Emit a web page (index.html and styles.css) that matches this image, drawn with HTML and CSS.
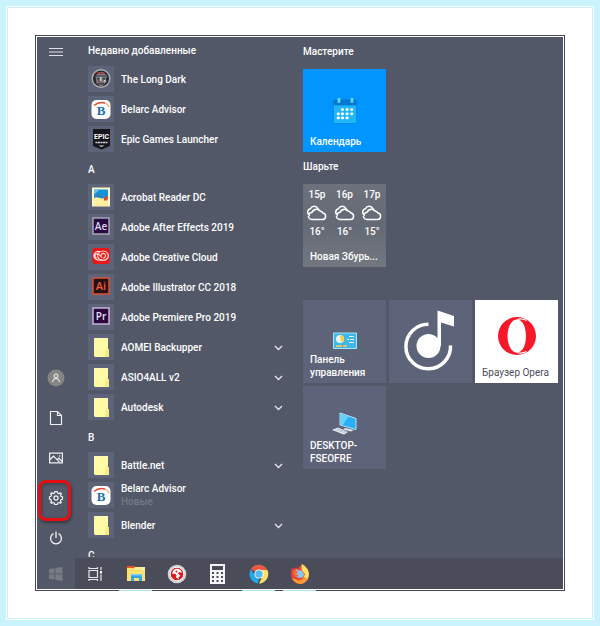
FILE: index.html
```html
<!DOCTYPE html>
<html lang="ru">
<head>
<meta charset="utf-8">
<title>Пуск</title>
<link rel="stylesheet" href="styles.css">
</head>
<body>
<svg class="defs" aria-hidden="true">
  <symbol id="folder" viewBox="0 0 26 26">
    <path fill="#fffaa6" d="M6 4h14v11l1 1v7H7l-1-1z"/>
    <path fill="#f8ea82" d="M18 15h3v8h-4z"/>
    <path fill="#fff5c0" d="M6 4h14v1H6z"/>
  </symbol>
  <symbol id="belarc" viewBox="0 0 26 26">
    <rect x="3.500" y="4" width="19" height="19" rx="5" fill="#fff"/>
    <path fill="none" stroke="#e8442e" stroke-width="1.500" d="M6 9.500Q11 5 17 7"/>
    <path fill="none" stroke="#f6a04c" stroke-width="1.200" d="M17 7q3 1 4 4"/>
    <text x="13" y="19" text-anchor="middle" font-family="Liberation Serif, serif" font-weight="bold" font-size="13" fill="#1c6fae">B</text>
  </symbol>
  <symbol id="chev" viewBox="0 0 9 9"><path fill="none" stroke="#e4e6ea" stroke-width="1.300" d="M1 3l3.500 3.500L8 3"/></symbol>
  <symbol id="cloud" viewBox="0 0 20 16">
    <path fill="none" stroke="#fff" stroke-width="1.500" stroke-linejoin="round" d="M5 14.500a3.500 3.500 0 0 1-.2-7A5 5 0 0 1 13.500 6.300a3.800 3.800 0 0 1 2.500 1.700a3.300 3.300 0 0 1-.3 6.500zM3 10.500a3.500 3.500 0 0 1 .5-6.700A4.200 4.200 0 0 1 11 3.500l1 2.500M5 7.500A4.500 4.500 0 0 1 9 4.500"/>
  </symbol>
</svg>

<div class="mat"><div class="mat-line"><div class="frame"><div class="desktop">
  <main class="menu">
    <nav class="rail" aria-label="Система">
      <button class="rail-btn rail-top" aria-label="Меню"><svg width="14" height="10" viewBox="0 0 14 10"><path stroke="#dfe1e6" d="M0 1.500h14M0 5h14M0 8.500h14"/></svg></button>
      <button class="rail-btn" aria-label="Пользователь"><svg width="18" height="18" viewBox="0 0 18 18"><circle cx="9" cy="9" r="8.500" fill="#858585"/><circle cx="9" cy="7" r="2" fill="none" stroke="#fff"/><path fill="none" stroke="#fff" d="M5.500 13a3.500 3.500 0 0 1 7 0"/></svg></button>
      <button class="rail-btn" aria-label="Документы"><svg width="14" height="16" viewBox="0 0 14 16"><path fill="none" stroke="#eceef1" stroke-width="1.200" d="M1.500 1.500h7l4 4v9h-11zM8.500 1.500v4h4"/></svg></button>
      <button class="rail-btn" aria-label="Изображения"><svg width="14" height="12" viewBox="0 0 14 12"><path fill="none" stroke="#eceef1" stroke-width="1.200" d="M.6 1.200h12.800v9.600H.6zM1 7.500l3.500-3.300 6 6M8 8l1.800-1.800 3.200 3"/><circle cx="10.500" cy="4" r=".8" fill="#eceef1"/></svg></button>
      <button class="rail-btn rail-marked" aria-label="Параметры"><svg width="16" height="16" viewBox="-8 -8 16 16"><g fill="none" stroke="#f4f5f7" stroke-width="1.200" stroke-linejoin="round"><path d="M-1.300 -6.300L1.300 -6.300L1.800 -4.700L3 -4.200L4.500 -5.200L5.400 -4.300L4.500 -2.800L4.900 -1.600L6.500 -1.200L6.500 1.200L4.900 1.700L4.400 2.900L5.300 4.400L4.400 5.300L2.900 4.500L1.700 5L1.300 6.500L-1.300 6.500L-1.700 5L-2.900 4.500L-4.400 5.300L-5.300 4.400L-4.500 2.900L-5 1.700L-6.500 1.200L-6.500 -1.200L-5 -1.700L-4.500 -2.900L-5.300 -4.400L-4.400 -5.300L-2.900 -4.400L-1.800 -4.800z"/><circle r="2.100"/></g></svg></button>
      <button class="rail-btn" aria-label="Выключение"><svg width="14" height="14" viewBox="0 0 14 14"><path fill="none" stroke="#f4f5f7" stroke-width="1.300" d="M4.500 2.700a5.400 5.400 0 1 0 5 0M7 .5v6.500"/></svg></button>
    </nav>

    <section class="apps">
      <h2 class="head">Недавно добавленные</h2>
      <a class="app" href="#"><svg class="ico" viewBox="0 0 26 26"><circle cx="13" cy="12.500" r="8.800" fill="#2c2a2f" stroke="#aeb0b5" stroke-width="1.400"/><path fill="#777b82" d="M7.500 10l3-3.500 5-.5 3.500 4-1 3 .5 3-4 4h-3l-3-3z"/><path fill="#3a3c46" d="M8 9.500h10v1H8zM9 12h2.500v1.500H9zM14.500 12h2.500v1.500h-2.500zM10 17h6v1.500h-6z"/><path fill="#a93b38" d="M9 6.500h7v1.500H9zM10 14h1.500v2.500H10z"/><path fill="#c7c9ce" d="M12 11h1.500v4H12zM16 14h1.500v2H16z"/></svg><span>The Long Dark</span></a>
      <a class="app" href="#"><svg class="ico"><use href="#belarc"/></svg><span>Belarc Advisor</span></a>
      <a class="app" href="#"><svg class="ico" viewBox="0 0 26 26"><path fill="#17161d" d="M5 3h17v17l-8.500 3.500L5 20z"/><text x="13.500" y="13" text-anchor="middle" font-family="Roboto, sans-serif" font-weight="700" font-size="7" fill="#fff">EPIC</text><path stroke="#d8d8dc" stroke-width="1.500" stroke-dasharray="2 .5" d="M7.500 16.500h12"/><path fill="#ddd" d="M10.500 19.500h6l-3 1.500z"/></svg><span>Epic Games Launcher</span></a>
      <h2 class="head">A</h2>
      <a class="app" href="#"><svg class="ico" viewBox="0 0 26 26"><path fill="#fff8c8" d="M4 3.500h18v19H4z"/><path fill="#1692dc" d="M6 5.500h14v9H6z"/><path fill="#62c3ec" d="M6 5.500h6l-6 5z"/><path fill="#fff1a0" d="M6 14l4-1 4 2 6-1v8H6z"/><path fill="#3c7ba5" d="M9 10.500l2-1 1 3h2v1H9z"/><path fill="#df4635" d="M16 13.500l3-2 1 3-1 2h-3z"/></svg><span>Acrobat Reader DC</span></a>
      <a class="app" href="#"><svg class="ico" viewBox="0 0 26 26"><path fill="#260b43" stroke="#a9a5b2" stroke-width="1.500" d="M5 4h16v16H5z"/><text x="13" y="16" text-anchor="middle" font-family="Open Sans, sans-serif" font-weight="600" font-size="10" fill="#ded2f2">Ae</text></svg><span>Adobe After Effects 2019</span></a>
      <a class="app" href="#"><svg class="ico" viewBox="0 0 26 26"><rect x="4.500" y="4" width="17" height="16" rx="3" fill="#ee1515"/><g fill="none" stroke="#ffd9d6" stroke-width="1.200"><ellipse cx="15" cy="11.700" rx="5.300" ry="4.700"/><path d="M12 7.800a4.300 4.300 0 1 0-.5 8h3M9 14a2 2 0 0 1 0-4.200q2 0 3 1.700l2 2.200M13 12a2.300 2.300 0 1 1 2 2"/></g></svg><span>Adobe Creative Cloud</span></a>
      <a class="app" href="#"><svg class="ico" viewBox="0 0 26 26"><path fill="#251217" stroke="#dd5130" stroke-width="1.500" d="M5 4h16v16H5z"/><text x="13" y="16" text-anchor="middle" font-family="Open Sans, sans-serif" font-weight="600" font-size="11" fill="#f05a34">Ai</text></svg><span>Adobe Illustrator CC 2018</span></a>
      <a class="app" href="#"><svg class="ico" viewBox="0 0 26 26"><path fill="#26083e" stroke="#c9b5d8" stroke-width="1.500" d="M5 4h16v16H5z"/><text x="13" y="16" text-anchor="middle" font-family="Open Sans, sans-serif" font-weight="600" font-size="10" fill="#f1e3fb">Pr</text></svg><span>Adobe Premiere Pro 2019</span></a>
      <a class="app" href="#"><svg class="ico"><use href="#folder"/></svg><span>AOMEI Backupper</span><svg class="chev"><use href="#chev"/></svg></a>
      <a class="app" href="#"><svg class="ico"><use href="#folder"/></svg><span>ASIO4ALL v2</span><svg class="chev"><use href="#chev"/></svg></a>
      <a class="app" href="#"><svg class="ico"><use href="#folder"/></svg><span>Autodesk</span><svg class="chev"><use href="#chev"/></svg></a>
      <h2 class="head">B</h2>
      <a class="app" href="#"><svg class="ico"><use href="#folder"/></svg><span>Battle.net</span><svg class="chev"><use href="#chev"/></svg></a>
      <a class="app" href="#"><svg class="ico"><use href="#belarc"/></svg><span>Belarc Advisor<small class="fresh">Новые</small></span></a>
      <a class="app" href="#"><svg class="ico"><use href="#folder"/></svg><span>Blender</span><svg class="chev"><use href="#chev"/></svg></a>
      <h2 class="head head-cut">C</h2>
    </section>

    <section class="tiles">
      <h2 class="tiles-head">Мастерите</h2>
      <div class="tile-grid">
        <a class="tile tile-calendar" href="#"><svg class="tile-pic" width="26" height="28" viewBox="0 0 28 30"><rect x="1" y="2" width="26" height="27" rx="3" fill="#0587e0"/><path fill="#0877cf" d="M2 3h24v6H2z"/><path fill="#1fb6fa" d="M2 9h24v19H2z"/><path fill="#62d5fb" d="M6 1h3v5H6zM20 1h3v5h-3z"/><path stroke="#fff" stroke-width="3" stroke-linecap="round" d="M11 13.500h.5M16 13.500h.5M21 13.500h.5M6.500 18h.5M11 18h.5M16 18h.5M21 18h.5M6.500 22.500h.5M11 22.500h.5M16 22.500h.5"/></svg><span>Календарь</span></a>
      </div>
      <h2 class="tiles-head">Шарьте</h2>
      <div class="tile-grid">
        <a class="tile tile-weather" href="#">
          <span class="hours">
            <span class="hour">15р<svg width="20" height="16"><use href="#cloud"/></svg>16°</span>
            <span class="hour">16р<svg width="20" height="16"><use href="#cloud"/></svg>16°</span>
            <span class="hour">17р<svg width="20" height="16"><use href="#cloud"/></svg>15°</span>
          </span>
          <span>Новая Збурь...</span>
        </a>
      </div>
      <div class="tile-grid tile-group">
        <a class="tile" href="#"><svg class="tile-pic pic-small" width="24" height="18" viewBox="0 0 24 18"><path fill="#3fb7ed" stroke="#a9e6fb" d="M.5 1h23v15.500H.5z"/><circle cx="7" cy="7" r="4" fill="#e6f7ff"/><path fill="#ffcf3f" d="M7 7V3a4 4 0 0 1 2 7.500z"/><path stroke="#e0f7ff" d="M16 4.500h5M14 7.500h2M17 7.500h4M16 10.500h5"/><path stroke="#f5d65b" stroke-width="1.500" d="M3 14h11"/><path stroke="#e06a3c" stroke-width="2" d="M9 14h1"/></svg><span>Панель управления</span></a>
        <a class="tile tile-full" href="#" aria-label="Музыка"><svg width="83" height="83" viewBox="0 0 83 83"><circle cx="39.500" cy="46" r="12" fill="#fff"/><path fill="#fff" d="M48.500 10.500L65 16v10.500l-13-4V46h-3.500z"/><path fill="none" stroke="#fff" stroke-width="3.500" d="M39.500 24.200A22.300 22.300 0 1 0 61.500 45.500"/></svg></a>
        <a class="tile tile-opera" href="#"><svg class="tile-pic pic-opera" width="40" height="40" viewBox="0 0 40 40"><path fill="#f9182a" fill-rule="evenodd" d="M20 1A19 19 0 1 0 20 39A19 19 0 1 0 20 1zM20 3.500C25.500 3.500 29 11 29 20S25.500 36.500 20 36.500S10.500 29 10.500 20S14.500 3.500 20 3.500z"/><path fill="none" stroke="#fff" stroke-width="1.200" d="M20 3.500q5-1.500 9.500 1M20 36.500q5 1.500 9.500-1"/></svg><span>Браузер Opera</span></a>
        <a class="tile" href="#"><svg class="tile-pic pic-small" width="28" height="24" viewBox="0 0 28 24"><path fill="#2aaef4" stroke="#b9e3f6" d="M9 1l16 5.500v11L9 13z"/><path fill="#68d0fb" d="M9.500 2l8 2.500-6 9-2-1z"/><path fill="#dfe6ee" d="M14 16l9 2-3 1.500-8-2z"/><path fill="#f1f4f8" d="M7 15.500L17 20l-4 2.500L1 18z"/><path stroke="#9ba6b8" stroke-width=".7" d="M4 17.800l10 3M6 16.600l9.500 3.500"/></svg><span>DESKTOP-FSEOFRE</span></a>
      </div>
    </section>
  </main>

  <footer class="taskbar">
    <button class="start" aria-label="Пуск"><svg width="14" height="14" viewBox="0 0 14 14"><path fill="#777b84" d="M0 2l5.500-.8v5.300H0zM6.300 1.100L13.500 0v6.500H6.300zM0 7.300h5.500v5.300L0 11.800zM6.300 7.300h7.200V14l-7.200-1.200z"/></svg></button>
    <button class="task task-view" aria-label="Представление задач"><svg width="15" height="14" viewBox="0 0 15 14"><path fill="none" stroke="#e7e8ec" stroke-width="1.200" d="M1 3.500h8.500v7H1zM1 0v1.500h8.500V0M1 14v-1.500h8.500V14M13 0v3M13 7.500V14"/><path fill="#fff" d="M12 4h2v2.500h-2z"/></svg></button>
    <button class="task running" aria-label="Проводник"><svg width="20" height="18" viewBox="0 0 20 18"><path fill="#e2552c" d="M1 1h8v4H1z"/><path fill="#ffe070" d="M1 3h7l1-1h10v14H1z"/><path fill="#ffee99" d="M9 2h10v3H9z"/><path fill="#36a5e8" d="M5 9h11v7h-3v-3H8v3H5z"/><path fill="#79cdf5" d="M5 9h11v1.500H5z"/></svg></button>
    <button class="task" aria-label="Просмотр"><svg width="20" height="20" viewBox="0 0 20 20"><circle cx="10" cy="10" r="9.300" fill="#d3d4da"/><circle cx="10" cy="10" r="6.800" fill="#e0191c" stroke="#fff"/><path fill="#fff" d="M5 9.500Q6 5 10 4.800q4 0 5 4L12 8l-1 1.500 2.500 2.500-2 1 .5 2.500-3-2 .5-2-1-1.500z"/><circle cx="9.500" cy="7.500" r="1" fill="#e0191c"/></svg></button>
    <button class="task" aria-label="Калькулятор"><svg width="17" height="20" viewBox="0 0 17 20"><path fill="#f5f5f7" d="M1 0h15v20H1z"/><path fill="#4a4c5a" d="M3 2h11v4H3z"/><path stroke="#4a4c5a" stroke-width="2" stroke-dasharray="2 2.500" d="M3 9h11M3 13h11M3 17h11"/></svg></button>
    <button class="task running" aria-label="Chrome"><svg width="20" height="20" viewBox="0 0 20 20"><path fill="#e85a43" d="M10 10L1.800 5.300A9.400 9.400 0 0 1 18.400 6H10z"/><path fill="#ffe16a" d="M10 6h8.400A9.400 9.400 0 0 1 10 19.400l3.700-7.400z"/><path fill="#23a7ec" d="M1.800 5.300L6.500 12l3.500 2-1 5.400A9.400 9.400 0 0 1 1.800 5.300z"/><circle cx="10" cy="10" r="4.600" fill="#fff"/><circle cx="10" cy="10" r="3.700" fill="#53b9ee"/></svg></button>
    <button class="task running" aria-label="Firefox"><svg width="20" height="20" viewBox="0 0 20 20"><path fill="#ef3e36" d="M2 4l2 1 2-2 1 2 5-5q7 4 7 11a8.900 8.900 0 0 1-18 0Q1 7 2 4z"/><path fill="#ffe165" d="M12 0q7 4 7 11a9 9 0 0 1-3 6q-1-2-3-2l2-5q-5-4-3-10z"/><path fill="#ff9a35" d="M5 15q5 3 10-2l3 2q-3 5-8 5-6-1-8-6z"/><path fill="#8bc4e8" d="M6 5q3 2 5 1l3 4q0 4-4 4T5 10z"/><path fill="#f4683a" d="M4 5l4 3-2 2 3 2-4 1-2-4z"/></svg></button>
  </footer>
</div></div></div></div>
</body>
</html>
```
FILE: styles.css
```css
* { box-sizing: border-box; }

body {
  margin: 0;
  background: #fff;
  font: 500 10px/13px Roboto, "Noto Sans", sans-serif;
  color: #fff;
}

.defs { display: none; }

a { color: inherit; text-decoration: none; }

button {
  display: flex;
  align-items: center;
  justify-content: center;
  padding: 0;
  border: 0;
  background: none;
}

h2 { margin: 0; font-size: 10px; font-weight: 500; }

/* Decorative border around the desktop */
.mat {
  display: flex;
  min-height: 100vh;
  padding: 1px;
  border: 6px solid #caf3fe;
}

.mat-line {
  display: flex;
  flex: 1;
  padding: 27px;
  border: 1px solid #caf3fe;
}

.frame {
  display: flex;
  flex: 1;
  padding: 1px;
  border: 1px solid #45485a;
}

.desktop {
  display: flex;
  flex: 1;
  flex-direction: column;
  background: #525868;
}

.menu { display: flex; flex: 1; }

/* System rail */
.rail {
  display: flex;
  flex-direction: column;
  width: 38px;
}

.rail-btn { position: relative; height: 40px; }
.rail-top { height: 30px; margin-bottom: auto; }

.rail-marked::after {
  content: "";
  position: absolute;
  inset: 2px 4px -3px 1px;
  border: 3px solid #e60d12;
  border-radius: 8px;
  box-shadow: 1px 2px 3px rgba(20, 24, 36, .5), inset 1px 1px 3px rgba(20, 24, 36, .4);
}

/* Application list */
.apps { width: 228px; padding: 0 20px 0 13px; }

.head { height: 28px; padding-top: 4px; line-height: 24px; }
.head:first-child { height: 27px; padding-top: 2px; }
.head-cut { height: 17px; overflow: hidden; }

.app {
  display: flex;
  align-items: center;
  gap: 7px;
  height: 30px;
}

.ico { width: 26px; height: 26px; background: #5d6378; }
.chev { width: 9px; height: 9px; margin-left: auto; }
.fresh { display: block; font-size: 10px; color: #747a89; }

/* Tiles */
.tiles { flex: 1; }

.tiles-head { height: 32px; line-height: 30px; }

.tile-grid {
  display: grid;
  grid-template-columns: repeat(3, 83px);
  grid-auto-rows: 83px;
  gap: 3px;
}

.tile-group { margin-top: 33px; }

.tile {
  display: flex;
  flex-direction: column;
  justify-content: flex-end;
  padding: 0 7px 4px;
  background: #5d6378;
}

.tile-pic { align-self: center; margin-bottom: 10px; }
.pic-small { margin-bottom: 3px; }

.tile-calendar { background: #0095ff; }
.tile-opera { background: #fff; color: #4b4e59; font-weight: 400; }
.tile-full { padding: 0; }

.tile-weather {
  justify-content: space-between;
  padding-top: 4px;
  background: linear-gradient(#6c717c, #646a75 50%, #727780);
}

.hours { display: flex; justify-content: space-between; margin: 0 -3px; }

.hour {
  display: flex;
  flex-direction: column;
  align-items: center;
  gap: 4px;
}

/* Taskbar */
.taskbar { display: flex; height: 31px; background: #4a4c5a; }
.start { width: 38px; background: #525868; }
.task { position: relative; width: 41px; }
.task-view { width: 40px; }

.running::after {
  content: "";
  position: absolute;
  inset: auto 4px -2px;
  height: 1px;
  background: #a9e3f0;
}
```
